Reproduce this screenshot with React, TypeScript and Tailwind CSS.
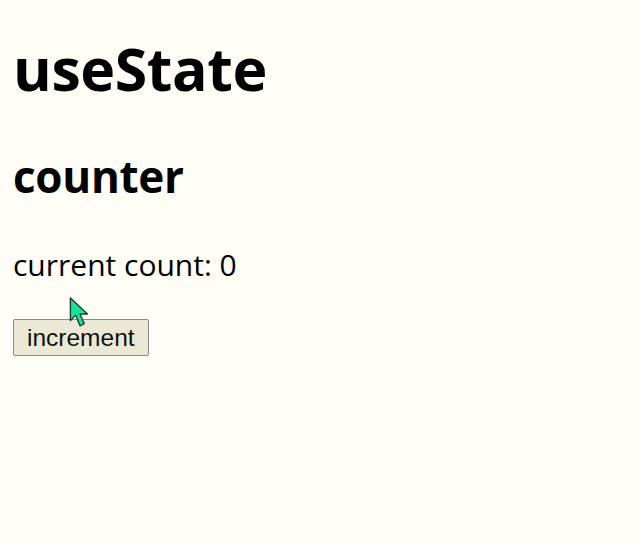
import { useState } from 'react';

function Cursor() {
  return (
    <svg
      className="pointer-events-none absolute left-[69px] top-[297px]"
      width="22"
      height="32"
      viewBox="0 0 20 30"
    >
      <path
        d="M1 1 L1 22 L6 17 L10 27 L14 25 L10 16 L17 16 Z"
        fill="#19e39a"
        stroke="#1d3a30"
        strokeWidth="1.3"
        strokeLinejoin="round"
      />
    </svg>
  );
}

export default function App() {
  const [count, setCount] = useState(0);

  return (
    <div className="relative min-h-[544px] bg-[#fffef6] px-[13px] pt-px text-black font-['Open_Sans',sans-serif]">
      <h1 className="mt-[27px] text-[59px] font-bold leading-[80px] tracking-[-0.4px]">useState</h1>
      <h2 className="mt-[38px] text-[44px] font-bold leading-[60px] tracking-[-0.3px]">counter</h2>
      <p className="mt-[39px] text-[30px] leading-[40px]">current count: {count}</p>
      <button
        className="mt-[34px] h-[37px] rounded-[2px] border border-[#8a8a8a] bg-[#ebe9d6] px-[13px] text-[24.5px] leading-[30px] text-[#111] font-['Liberation_Sans',Arial,sans-serif]"
        onClick={() => setCount(count + 1)}
      >
        increment
      </button>
      <Cursor />
    </div>
  );
}
